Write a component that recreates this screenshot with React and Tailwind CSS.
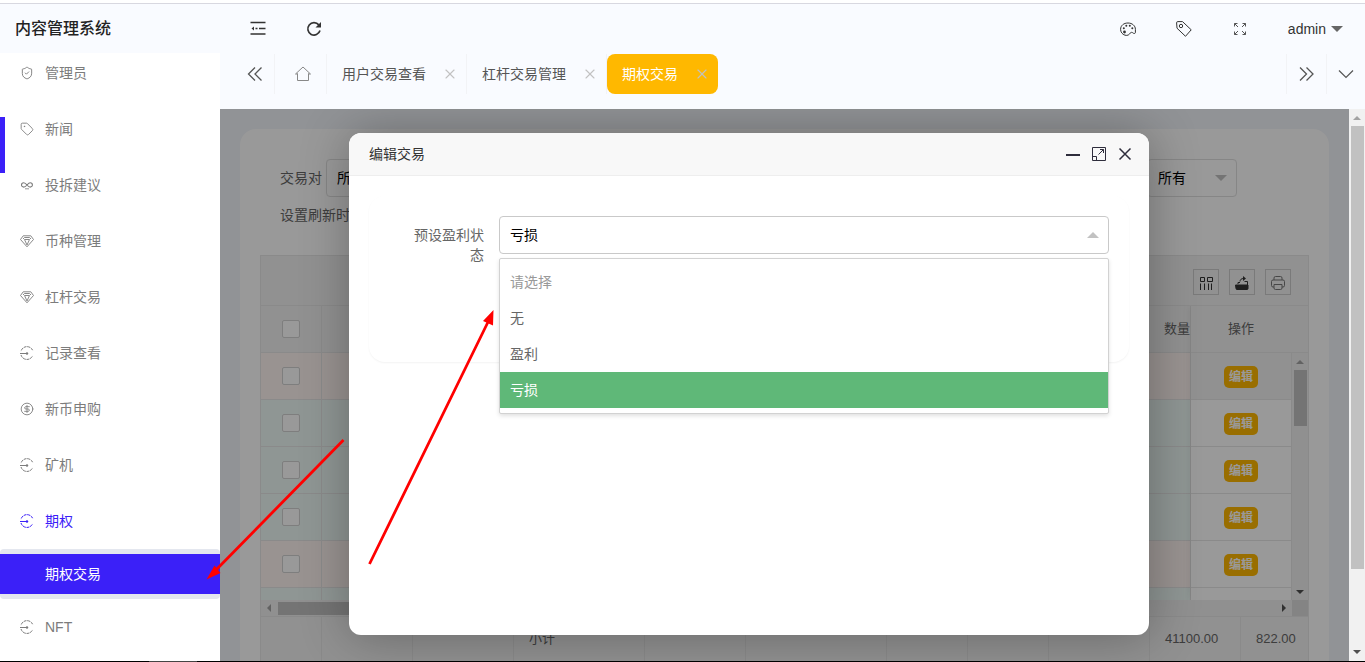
import React, { useState } from 'react';
import { ShieldCheck, Tag, CircleDollarSign, X } from 'lucide-react';

const InfinityIcon = () => (
  <svg viewBox="0 0 14 14" className="h-3.5 w-3.5" fill="none" stroke="currentColor" strokeWidth="1.1">
    <path d="M7 7C5.8 5.4 4.9 4.7 3.7 4.7a2.2 2.2 0 0 0 0 4.4C4.9 9.1 5.8 8.4 7 7s2-2.3 3.2-2.3a2.2 2.2 0 0 1 0 4.4C9 9.1 8.2 8.4 7 7z" />
    <path d="M5 10.8h4" strokeWidth="0.8" />
  </svg>
);

const DiamondIcon = () => (
  <svg viewBox="0 0 14 14" className="h-3.5 w-3.5" fill="none" stroke="currentColor" strokeWidth="0.9" strokeLinejoin="round">
    <path d="M3.2 1.8h7.6L13.5 5.5 7 12.8 0.5 5.5z" />
    <path d="M3 5l1.500-1.500h5L11 5M4.500 5.500h5L7 11z" />
  </svg>
);

const RecordIcon = () => (
  <svg viewBox="0 0 14 14" className="h-3.5 w-3.5" fill="none" stroke="currentColor">
    <path d="M12.6 4.2A6.2 6.2 0 0 0 1 5.2M1 9a6.2 6.2 0 0 0 11.6 0.8" strokeDasharray="3 0.7" />
    <path d="M0 7.500h6" />
    <circle cx="7" cy="7.500" r="1.200" fill="currentColor" stroke="none" />
  </svg>
);

const menuItems = [
  { label: '管理员', icon: <ShieldCheck size={14} strokeWidth={1.6} /> },
  { label: '新闻', icon: <Tag size={14} strokeWidth={1.5} /> },
  { label: '投拆建议', icon: <InfinityIcon /> },
  { label: '币种管理', icon: <DiamondIcon /> },
  { label: '杠杆交易', icon: <DiamondIcon /> },
  { label: '记录查看', icon: <RecordIcon /> },
  { label: '新币申购', icon: <CircleDollarSign size={14} strokeWidth={1.5} /> },
  { label: '矿机', icon: <RecordIcon /> },
  { label: '期权', icon: <RecordIcon />, open: true, children: ['期权交易'] },
  { label: 'NFT', icon: <RecordIcon /> },
];

const tabs = [
  { label: '用户交易查看' },
  { label: '杠杆交易管理' },
  { label: '期权交易', active: true },
];

const rows = ['loss', 'win', 'win', 'win', 'loss'];

const totals = ['', '', '', '小计', '', '', '', '', '', '41100.00', '822.00'];

const options = ['请选择', '无', '盈利', '亏损'];

const Caret = ({ className }) => (
  <svg viewBox="0 0 12 6" className={className} fill="currentColor">
    <path d="M0 0h12L6 6z" />
  </svg>
);

const Sidebar = () => (
  <aside className="relative flex w-[220px] shrink-0 flex-col overflow-hidden bg-white">
    <h1 className="relative z-10 flex h-[49px] shrink-0 items-center bg-[#f9fbff] pl-[15px] text-base font-medium text-[#222]">
      内容管理系统
    </h1>
    <ul className="-mt-2">
      {menuItems.map((item) => (
        <li key={item.label}>
          <a
            href="#"
            className={`flex h-14 items-center gap-[11px] pl-5 ${item.open ? 'text-[#3b20f8]' : 'text-[#7c7c7c]'}`}
          >
            {item.icon}
            {item.label}
          </a>
          {item.children && (
            <div className="rounded-sm bg-[#e4e7ef] py-[5px]">
              {item.children.map((child) => (
                <a key={child} href="#" className="flex h-10 items-center bg-[#3b20f8] pl-[45px] text-white">
                  {child}
                </a>
              ))}
            </div>
          )}
        </li>
      ))}
    </ul>
    <span className="absolute left-0 top-[113px] h-14 w-[5px] bg-[#3b20f8]" />
  </aside>
);

const Header = () => (
  <header className="flex h-[50px] shrink-0 items-center justify-between pl-2.5 text-[#333]">
    <div className="flex">
      <button aria-label="收起菜单" className="flex w-14 justify-center">
        <svg viewBox="0 0 16 14" className="h-3.5 w-4" fill="none" stroke="currentColor" strokeWidth="1.5">
          <path d="M0.5 1.500h15M5.500 7.500h2M9 7.500h6.500M0.500 13h15" />
          <path d="M4 5.500v4L1.500 7.500z" fill="currentColor" stroke="none" />
        </svg>
      </button>
      <button aria-label="刷新" className="flex w-14 justify-center">
        <svg viewBox="0 0 16 16" className="h-4 w-4" fill="none" stroke="currentColor" strokeWidth="1.7">
          <path d="M12.8 3.9A6.2 6.2 0 1 0 14 9.6" />
          <path d="M15 1v5.5H9.5z" fill="currentColor" stroke="none" />
        </svg>
      </button>
    </div>
    <div className="flex items-center">
      <button aria-label="主题" className="flex w-14 justify-center">
        <svg viewBox="0 0 16 16" className="h-4 w-4" fill="none" stroke="currentColor">
          <path d="M5 14.200C2.200 13.400 0.600 11 0.600 8.300 0.600 4.500 3.800 2 8 2s7.400 2.800 7.400 6.300v3.200c0 1-1.400 1.400-2.200 0.600-1-1-2.400-1-3 0-0.900 1.600-2.600 2.800-5.200 2.100z" />
          <circle cx="4.500" cy="11" r="1.400" fill="currentColor" stroke="none" />
          <circle cx="3.800" cy="7.300" r="1" fill="currentColor" stroke="none" />
          <circle cx="6.300" cy="4.800" r="1" fill="currentColor" stroke="none" />
          <circle cx="9.800" cy="4.800" r="1" fill="currentColor" stroke="none" />
          <circle cx="12.300" cy="7.300" r="1" fill="currentColor" stroke="none" />
        </svg>
      </button>
      <button aria-label="便签" className="flex w-14 justify-center">
        <svg viewBox="0 0 16 16" className="h-4 w-4" fill="none" stroke="currentColor" strokeLinejoin="round">
          <path d="M0.600 1.800A1.200 1.200 0 0 1 1.800 0.600H6.500L15.200 8.800 9.500 15.300 1 7.200z" />
          <circle cx="5" cy="5" r="1.700" />
        </svg>
      </button>
      <button aria-label="全屏" className="flex w-14 justify-center">
        <svg viewBox="0 0 14 14" className="h-3.5 w-3.5" fill="none" stroke="#555">
          <path d="M1.500 4.500v-3h3M1.500 1.500l3.500 3.500M9.500 1.500h3v3M12.500 1.500L9 5M1.500 9.500v3h3M1.500 12.500L5 9M9.500 12.500h3v-3M12.500 12.500L9 9" />
        </svg>
      </button>
      <button className="flex items-center gap-[5px] pl-5 pr-[22px]">
        admin
        <Caret className="h-1.5 w-3 text-[#666]" />
      </button>
    </div>
  </header>
);

const TabBar = () => (
  <div className="flex shrink-0 pb-[15px] pl-[15px] text-[#555]">
    <button aria-label="向左" className="flex h-10 w-10 items-center justify-center border-r border-[#f2f3f6]">
      <svg viewBox="0 0 16 16" className="h-4 w-4" fill="none" stroke="currentColor" strokeWidth="1.3">
        <path d="M8 1.5L1.5 8 8 14.5M14.500 1.5L8 8l6.5 6.5" />
      </svg>
    </button>
    <button aria-label="主页" className="flex h-10 w-[52px] items-center justify-center border-r border-[#f2f3f6] pl-1">
      <svg viewBox="0 0 16 16" className="h-4 w-4" fill="none" stroke="#888">
        <path d="M2.500 7.5v7h11v-7M0.5 8L8 1l7.5 7H13M0.5 8H3" />
      </svg>
    </button>
    <div className="flex grow">
      {tabs.map((tab) => (
        <div
          key={tab.label}
          className={`flex h-10 items-center gap-[18px] pl-[15px] pr-2.5 ${
            tab.active ? 'rounded-lg bg-[#ffb800] text-white' : 'border-r border-[#f2f3f6]'
          }`}
        >
          <a href="#" className="whitespace-nowrap">{tab.label}</a>
          <button aria-label="关闭" className="-mx-0.5 text-[#c2c2c2]">
            <X size={16} strokeWidth={1.7} />
          </button>
        </div>
      ))}
    </div>
    <button aria-label="向右" className="flex h-10 w-[41px] items-center justify-center border-x border-[#f2f3f6]">
      <svg viewBox="0 0 16 16" className="h-4 w-4" fill="none" stroke="currentColor" strokeWidth="1.3">
        <path d="M1 1.5L7.5 8 1 14.5M7.500 1.5L14 8l-6.500 6.5" />
      </svg>
    </button>
    <button aria-label="更多" className="flex h-10 w-[38px] items-center justify-center">
      <svg viewBox="0 0 16 16" className="h-4 w-4" fill="none" stroke="currentColor" strokeWidth="1.2">
        <path d="M1 4.5l7 7 7-7" />
      </svg>
    </button>
  </div>
);

const FilterSelect = ({ id, label }) => (
  <div className="relative">
    <select id={id} aria-label={label} className="h-[38px] w-[90px] appearance-none rounded-sm border border-[#e0e0e0] bg-white pl-2.5 text-black">
      <option>所有</option>
    </select>
    <Caret className="pointer-events-none absolute right-2.5 top-4 h-1.5 w-3 text-[#c2c2c2]" />
  </div>
);

const ToolButton = ({ label, children }) => (
  <button aria-label={label} className="flex h-[26px] w-[26px] items-center justify-center border border-[#ccc] pt-px text-[#333]">
    {children}
  </button>
);

const Check = ({ label }) => (
  <input
    type="checkbox"
    aria-label={label}
    className="mx-auto block h-[18px] w-[18px] appearance-none rounded-xs border border-[#d2d2d2] bg-white"
  />
);

const TradeTable = () => (
  <div className="border border-[#e6e6e6] text-[13px] text-[#666]">
    <div className="flex h-[50px] items-end justify-end gap-2.5 border-b border-[#e6e6e6] bg-[#f2f2f2] pb-2.5 pr-[17px]">
      <ToolButton label="筛选列">
        <svg viewBox="0 0 14 14" className="h-3.5 w-3.5" fill="none" stroke="currentColor">
          <path d="M1.5 1.500h4v4h-4zM8.500 1.500h5v4h-5zM1.5 7.5V14M5.500 7.5V14M9.500 7.5V14M12.500 7.5V14" />
        </svg>
      </ToolButton>
      <ToolButton label="导出">
        <svg viewBox="0 0 14 14" className="h-3.5 w-3.5" fill="none" stroke="currentColor">
          <path d="M0.5 9h12.500v3.500a1 1 0 0 1-1 1H2a1 1 0 0 1-1-1z" fill="currentColor" />
          <path d="M3 8V6.500h2M9.5 5.500h3V9M5 5.500C5 3.500 6.500 2.500 8.500 2.500" />
          <path d="M8 0l3 2.5-3 2.500z" fill="currentColor" stroke="none" />
        </svg>
      </ToolButton>
      <ToolButton label="打印">
        <svg viewBox="0 0 14 14" className="h-3.5 w-3.5" fill="none" stroke="#777">
          <path d="M3 4V2a1.500 1.500 0 0 1 1.500-1.500h5A1.500 1.500 0 0 1 11 2v2M3 11H2a1.500 1.500 0 0 1-1.500-1.500v-4A1.500 1.500 0 0 1 2 4h10a1.500 1.500 0 0 1 1.500 1.500v4A1.500 1.500 0 0 1 12 11h-1M3 8.500h8v3.500a1.500 1.500 0 0 1-1.500 1.500h-5A1.500 1.500 0 0 1 3 12z" />
        </svg>
      </ToolButton>
    </div>
    <div className="flex h-[294px] overflow-hidden">
      <table className="grow table-fixed border-separate border-spacing-0 self-start">
        <thead>
          <tr className="bg-[#f2f2f2]">
            <th className="h-[47px] w-[61px] border-b border-r border-[#e6e6e6] p-0">
              <Check label="全选" />
            </th>
            <th className="border-b border-[#e6e6e6]" />
            <th className="w-[42px] whitespace-nowrap border-b border-r border-[#e6e6e6] p-0 pl-[15px] text-left font-normal">
              数量
            </th>
          </tr>
        </thead>
        <tbody>
          {rows.map((type, i) => (
            <tr key={i} className={type === 'loss' ? 'bg-[#fff5f2]' : 'bg-[#effbf7]'}>
              <td className="h-[47px] border-b border-r border-[#e6e6e6] p-0">
                <Check label="选择" />
              </td>
              <td className="border-b border-[#e6e6e6]" />
              <td className="border-b border-r border-[#e6e6e6]" />
            </tr>
          ))}
          <tr className="bg-[#effbf7]">
            <td className="h-[47px] border-r border-[#e6e6e6]" />
            <td />
            <td className="border-r border-[#e6e6e6]" />
          </tr>
        </tbody>
      </table>
      <div className="w-[117px] shrink-0 shadow-[-1px_0_8px_rgba(0,0,0,0.08)]">
        <div className="flex h-[47px] items-center border-b border-[#e6e6e6] bg-[#f2f2f2]">
          <span className="w-[100px] text-center">操作</span>
        </div>
        <div className="flex h-[247px] overflow-hidden">
          <ul className="w-[101px] shrink-0 border-r border-[#e6e6e6] bg-white">
            {rows.map((_, i) => (
              <li
                key={i}
                className={`flex h-[47px] items-center justify-center border-b border-[#e6e6e6] pt-px ${i === 0 ? 'bg-[#f2f2f2]' : 'bg-white'}`}
              >
                <button className="h-[22px] rounded-[5px] bg-[#ffb800] px-[5px] text-xs font-bold text-white">编辑</button>
              </li>
            ))}
          </ul>
          <div className="flex grow flex-col items-center bg-[#f1f1f1] pb-1.5 pt-[7px]">
            <Caret className="h-1 w-2 rotate-180 text-[#a3a3a3]" />
            <div className="mt-1.5 h-14 w-[13px] bg-[#c1c1c1]" />
            <Caret className="mt-auto h-1 w-2 text-[#505050]" />
          </div>
        </div>
      </div>
    </div>
    <div className="flex h-[17px] items-center border-b border-[#e6e6e6] bg-[#f1f1f1] pl-1">
      <Caret className="h-1 w-2 rotate-90 text-[#a3a3a3]" />
      <div className="ml-[5px] h-[13px] w-2/5 bg-[#c1c1c1]" />
      <Caret className="ml-auto mr-1 h-1 w-2 -rotate-90 text-[#505050]" />
      <span className="h-4 w-4 bg-[#dcdcdc]" />
    </div>
    <table className="w-full table-fixed border-separate border-spacing-0 bg-[#f2f2f2]">
      <colgroup>
        <col className="w-[61px]" />
        <col className="w-[91px]" />
        <col className="w-[101px]" />
        <col className="w-[131px]" />
        <col className="w-[101px]" />
        <col className="w-[141px]" />
        <col className="w-[81px]" />
        <col className="w-[81px]" />
        <col className="w-[101px]" />
        <col className="w-[91px]" />
        <col />
      </colgroup>
      <tbody>
        <tr>
          {totals.map((value, i) => (
            <td key={i} className="h-12 border-r border-[#e6e6e6] p-0 pb-1 pl-[15px] last:border-r-0">{value}</td>
          ))}
        </tr>
      </tbody>
    </table>
  </div>
);

const EditDialog = () => {
  const [value, setValue] = useState('亏损');

  return (
    <section
      role="dialog"
      aria-label="编辑交易"
      className="absolute left-[129px] top-6 h-[502px] w-[800px] rounded-xl bg-white shadow-[1px_1px_50px_rgba(0,0,0,0.3)]"
    >
      <div className="flex h-[43px] items-center justify-between rounded-t-xl border-b border-[#eee] bg-[#f8f8f8] pl-5 pr-[17px] text-[#333]">
        <h2>编辑交易</h2>
        <div className="flex items-center gap-3 text-[#2e2d3c]">
          <button aria-label="最小化">
            <svg viewBox="0 0 14 14" className="h-3.5 w-3.5" stroke="currentColor" strokeWidth="2">
              <path d="M0 8h14" />
            </svg>
          </button>
          <button aria-label="最大化">
            <svg viewBox="0 0 14 14" className="h-3.5 w-3.5" fill="none" stroke="currentColor">
              <path d="M0.5 0.500h13v13h-13zM0.500 9.500h4v4M6.500 7.500l5-5M8 2.500h3.500V6" />
            </svg>
          </button>
          <button aria-label="关闭">
            <svg viewBox="0 0 14 14" className="h-3.5 w-3.5" stroke="currentColor" strokeWidth="1.5">
              <path d="M1.5 1.500l11 11M12.500 1.500l-11 11" />
            </svg>
          </button>
        </div>
      </div>
      <form className="m-5 flex h-[166px] items-start rounded-2xl p-5 shadow-[0_1px_2px_rgba(0,0,0,0.05)]">
        <label htmlFor="status" className="w-[110px] shrink-0 px-[15px] py-[9px] text-right leading-5 text-[#666]">
          预设盈利状态
        </label>
        <div className="relative grow">
          <select
            id="status"
            value={value}
            onChange={(e) => setValue(e.target.value)}
            className="h-[38px] w-full appearance-none rounded-sm border border-[#c9c9c9] bg-white pl-2.5 text-black"
          >
            {options.map((option) => (
              <option key={option}>{option}</option>
            ))}
          </select>
          <Caret className="pointer-events-none absolute right-2.5 top-4 h-1.5 w-3 rotate-180 text-[#c2c2c2]" />
          <ul
            role="listbox"
            className="absolute inset-x-0 top-[42px] rounded-xs border border-[#d2d2d2] bg-white py-[5px] shadow-[0_2px_4px_rgba(0,0,0,0.12)]"
          >
            {options.map((option, i) => (
              <li
                key={option}
                role="option"
                aria-selected={option === value}
                onClick={() => setValue(option)}
                className={`flex h-9 items-center px-2.5 ${
                  option === value ? 'bg-[#5fb878] text-white' : i === 0 ? 'text-[#999]' : 'text-[#666]'
                }`}
              >
                {option}
              </li>
            ))}
          </ul>
        </div>
      </form>
    </section>
  );
};

const App = () => (
  <div className="relative flex h-screen flex-col overflow-hidden bg-white font-['Liberation_Sans','Noto_Sans_CJK_SC',sans-serif] text-sm">
    <div className="h-1 shrink-0 border-b border-[#d8d8e0]" />
    <div className="flex min-h-0 grow">
      <Sidebar />
      <div className="flex min-w-0 grow flex-col bg-[#f9fbff]">
        <Header />
        <TabBar />
        <div className="flex min-h-0 grow">
          <main className="relative min-w-0 grow overflow-hidden bg-[#f2f5fa] p-5">
            <div className="rounded-2xl bg-white p-5 pt-[30px]">
              <form className="mb-[30px] px-5 text-[#666]">
                <div className="mb-2 flex items-center gap-1 pr-[52px]">
                  <label htmlFor="pair">交易对</label>
                  <FilterSelect id="pair" label="交易对" />
                  <div className="ml-auto">
                    <FilterSelect id="state" label="状态" />
                  </div>
                </div>
                <p className="h-5 leading-5">设置刷新时间</p>
              </form>
              <TradeTable />
            </div>
            <div className="absolute inset-0 bg-black/40" />
            <EditDialog />
          </main>
          <div className="flex w-4 shrink-0 flex-col items-center bg-[#f1f1f1] pb-[7px] pt-[7px]">
            <Caret className="h-1 w-2 rotate-180 text-[#a3a3a3]" />
            <div className="mb-[81px] mt-1.5 w-[13px] grow bg-[#c1c1c1]" />
            <Caret className="h-1 w-2 text-[#505050]" />
          </div>
        </div>
      </div>
    </div>
    <div className="flex h-px shrink-0 bg-black">
      <span className="ml-[149px] w-12 bg-[#444]" />
    </div>

    {/* Annotation arrows */}
    <svg className="pointer-events-none absolute left-0 top-0 h-[662px] w-[1365px]" viewBox="0 0 1365 662" stroke="#f00" strokeWidth="2.8" fill="#f00">
      <path d="M343.500 440L215 571M369.500 564L488 322" />
      <path d="M206.5 579.500l8-14 6 7.500zM493.500 310l-10.500 11 10 4.500z" stroke="none" />
    </svg>
  </div>
);

export default App;
